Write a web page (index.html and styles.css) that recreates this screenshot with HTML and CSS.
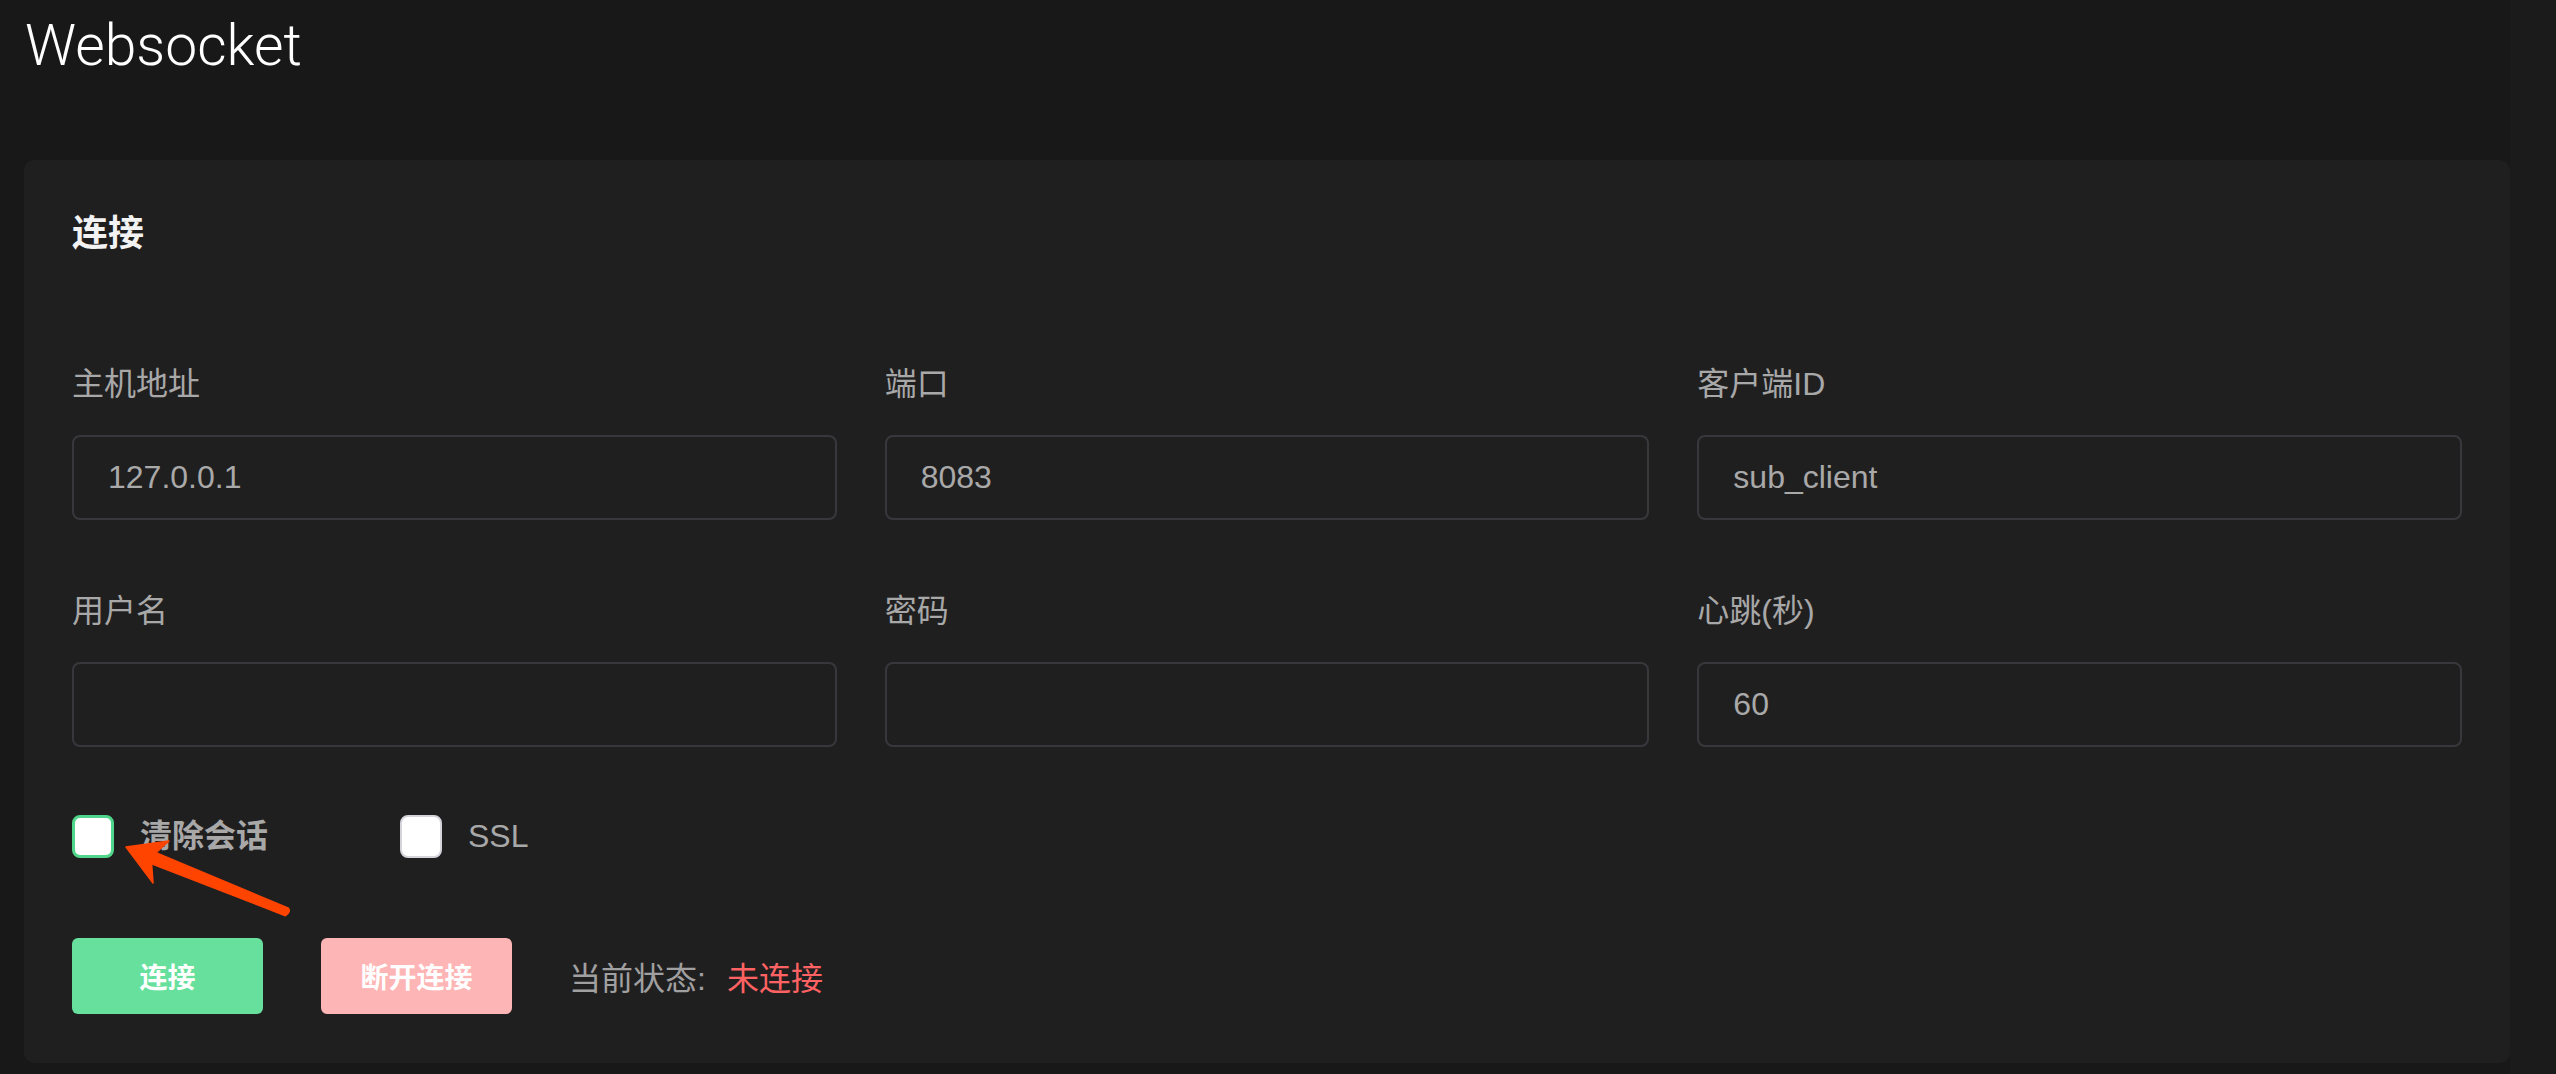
FILE: index.html
```html
<!DOCTYPE html>
<html lang="zh-CN">
<head>
    <meta charset="UTF-8">
    <meta name="viewport" content="width=device-width, initial-scale=1.0">
    <title>Websocket</title>
    <link rel="stylesheet" href="styles.css">
</head>
<body>

<div class="page">
    <main class="content">
        <h1 class="page-title">Websocket</h1>

        <section class="card">
            <h2 class="card-title">连接</h2>

            <div class="form-grid">
                <div class="field">
                    <label for="host">主机地址</label>
                    <input type="text" id="host" value="127.0.0.1">
                </div>
                <div class="field">
                    <label for="port">端口</label>
                    <input type="text" id="port" value="8083">
                </div>
                <div class="field">
                    <label for="clientId">客户端ID</label>
                    <input type="text" id="clientId" value="sub_client">
                </div>
                <div class="field">
                    <label for="username">用户名</label>
                    <input type="text" id="username">
                </div>
                <div class="field">
                    <label for="password">密码</label>
                    <input type="password" id="password">
                </div>
                <div class="field">
                    <label for="keepalive">心跳(秒)</label>
                    <input type="text" id="keepalive" value="60">
                </div>
            </div>

            <div class="options">
                <label class="check check-active">
                    <input type="checkbox" id="clean">
                    <span class="check-bold">清除会话</span>
                </label>
                <label class="check">
                    <input type="checkbox" id="ssl">
                    <span>SSL</span>
                </label>
            </div>

            <div class="actions">
                <button class="btn btn-connect">连接</button>
                <button class="btn btn-disconnect">断开连接</button>
                <span class="status">当前状态:<span class="status-value">未连接</span></span>
            </div>

            <!-- annotation arrow pointing at the checkbox -->
            <svg class="annotation" width="200" height="100" viewBox="0 0 200 100">
                <path d="M16 17 L59 11 L46 22.6 L178.5 78.3 Q181 82 175.5 85.7 L41.6 33.8 L43 53 Z"
                      fill="#ff4400" stroke="#ff4400" stroke-width="1.5" stroke-linejoin="round"/>
            </svg>
        </section>
    </main>
    <div class="side-strip"></div>
</div>

</body>
</html>
```

FILE: styles.css
```css
body {
    margin: 0;
    padding: 0;
    height: 100vh;
    overflow: hidden;
    background-color: #181818;
    font-family: "Liberation Sans", "Noto Sans CJK SC", sans-serif;
}
.page {
    display: flex;
    height: 100%;
}
.content {
    flex: 1;
    padding: 13px 0 0 24px;
}
.side-strip {
    width: 46px;
    background-color: #1b1b1b;
}
.page-title {
    margin: 0 0 81px;
    padding-left: 1px;
    font-family: Roboto, sans-serif;
    font-weight: 300;
    font-size: 57px;
    line-height: 66px;
    color: #ffffff;
}
.card {
    position: relative;
    background-color: #201f20;
    border-radius: 10px;
    padding: 45px 48px 49px;
}
.card-title {
    margin: 0 0 107px;
    font-family: "Noto Sans CJK SC", sans-serif;
    font-size: 36px;
    line-height: 50px;
    font-weight: 700;
    color: #f2f2f2;
}
.form-grid {
    display: grid;
    grid-template-columns: repeat(3, 1fr);
    column-gap: 48px;
    row-gap: 69px;
}
.field label {
    display: block;
    margin-bottom: 29px;
    font-size: 32px;
    line-height: 44px;
    color: #a8a8a8;
}
.field input {
    display: block;
    width: 100%;
    height: 85px;
    box-sizing: border-box;
    padding: 0 34px;
    background-color: transparent;
    border: 2px solid #38373b;
    border-radius: 8px;
    font-family: inherit;
    font-size: 32px;
    color: #a9a9a9;
    outline: none;
}
.options {
    display: flex;
    align-items: center;
    gap: 132px;
    height: 44px;
    margin-top: 67px;
}
.check {
    display: flex;
    align-items: center;
    gap: 26px;
    font-size: 32px;
    line-height: 44px;
    color: #a8a8a8;
}
.check-bold {
    font-weight: 700;
}
.check input[type="checkbox"] {
    appearance: none;
    -webkit-appearance: none;
    width: 42px;
    height: 43px;
    margin: 0;
    box-sizing: border-box;
    background-color: #ffffff;
    border: 2px solid #d4d4da;
    border-radius: 8px;
}
.check-active input[type="checkbox"] {
    border: 3px solid #4fd68a;
}
.actions {
    display: flex;
    align-items: center;
    margin-top: 80px;
}
.btn {
    width: 191px;
    height: 76px;
    margin-right: 58px;
    border: none;
    border-radius: 6px;
    font-family: "Noto Sans CJK SC", sans-serif;
    font-size: 28px;
    font-weight: 700;
    color: #ffffff;
    cursor: pointer;
}
.btn-connect {
    background-color: #67e09d;
}
.btn-disconnect {
    background-color: #feb5b5;
    margin-right: 57px;
}
.status {
    font-size: 32px;
    color: #a0a0a0;
}
.status-value {
    margin-left: 21px;
    color: #ff6262;
}
.annotation {
    position: absolute;
    left: 86px;
    top: 670px;
}
```
